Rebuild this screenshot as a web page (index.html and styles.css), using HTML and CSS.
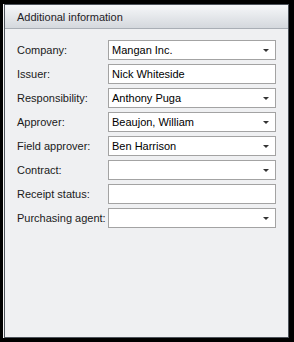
FILE: index.html
```html
<!DOCTYPE html>
<html>
<head>
  <title>Additional information</title>
  <link rel="stylesheet" href="styles.css">
</head>
<body>
  <div class="window">
    <div class="header">Additional information</div>

    <div class="form">
      <label>Company:</label>
      <div class="field combo">Mangan Inc.<span class="arrow"></span></div>

      <label>Issuer:</label>
      <div class="field">Nick Whiteside</div>

      <label>Responsibility:</label>
      <div class="field combo">Anthony Puga<span class="arrow"></span></div>

      <label>Approver:</label>
      <div class="field combo">Beaujon, William<span class="arrow"></span></div>

      <label>Field approver:</label>
      <div class="field combo">Ben Harrison<span class="arrow"></span></div>

      <label>Contract:</label>
      <div class="field combo"><span class="arrow"></span></div>

      <label>Receipt status:</label>
      <div class="field"></div>

      <label>Purchasing agent:</label>
      <div class="field combo"><span class="arrow"></span></div>
    </div>
  </div>
</body>
</html>
```

FILE: styles.css
```css
html, body { margin: 0; height: 100%; }
body { background: #000; font-family: "Liberation Sans", Arial, sans-serif; font-size: 11px; color: #1a1a1a; }

.window {
  box-sizing: border-box;
  height: 334px;
  margin: 4px 5px 4px 4px;
  border: 1px solid #4d535b;
  background: #eff0f2;
  box-shadow: -1px 0 0 #f4f4f4;
}

.header {
  height: 23px;
  line-height: 25px;
  padding-left: 12px;
  border-bottom: 1px solid #a9aeb5;
  background: linear-gradient(#f6f7f9, #d4d8dd);
  color: #1e2126;
}

.form {
  display: grid;
  grid-template-columns: 91px 168px;
  grid-auto-rows: 20px;
  row-gap: 4px;
  padding: 11px 0 0 12px;
}

.form label { display: flex; align-items: center; }

.field {
  position: relative;
  box-sizing: border-box;
  height: 20px;
  line-height: 18px;
  padding-left: 3px;
  border: 1px solid #a3a3a3;
  background: #fff;
  color: #000;
}

.arrow {
  position: absolute;
  right: 6px;
  top: 8px;
  width: 0;
  height: 0;
  border-left: 3px solid transparent;
  border-right: 3px solid transparent;
  border-top: 3px solid #333;
}
```
